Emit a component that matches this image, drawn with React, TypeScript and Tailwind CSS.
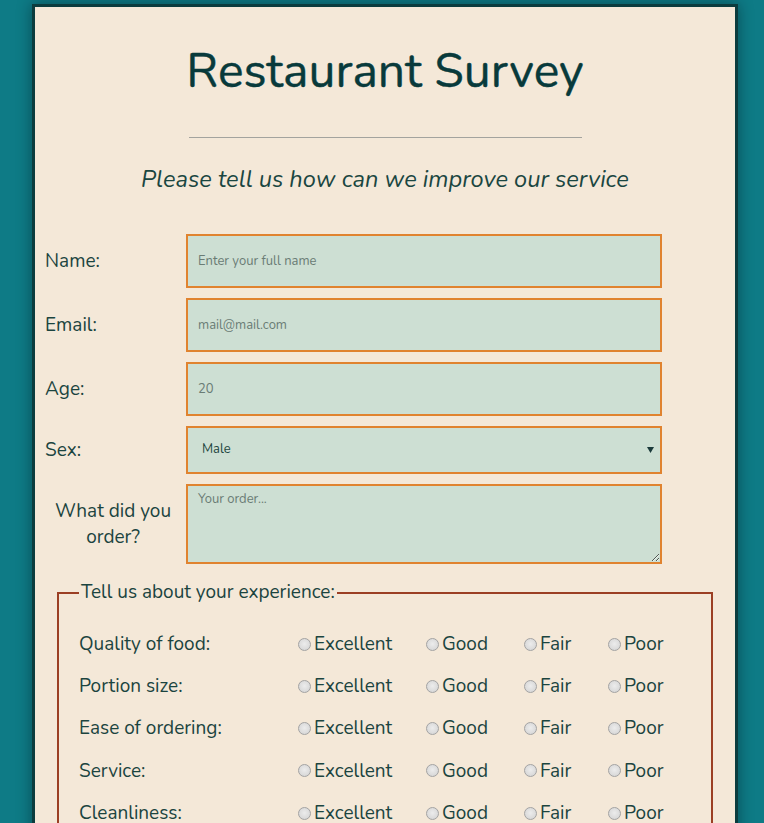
import React from "react";

const font = { fontFamily: "Nunito, Lato, 'Open Sans', sans-serif" };

const rows = ["Quality of food:", "Portion size:", "Ease of ordering:", "Service:", "Cleanliness:"];
const opts: { label: string; w: string }[] = [
  { label: "Excellent", w: "w-[128px]" },
  { label: "Good", w: "w-[98px]" },
  { label: "Fair", w: "w-[84px]" },
  { label: "Poor", w: "w-[80px]" },
];

function Radio({ name }: { name: string }) {
  return (
    <input
      type="radio"
      name={name}
      className="appearance-none w-[13px] h-[13px] rounded-full border border-[#a3a3a3] bg-[radial-gradient(circle_at_50%_45%,#ececec_0%,#dcdcdc_60%,#cfcfcf_100%)] m-0 shrink-0"
    />
  );
}

export default function App() {
  const inputCls =
    "w-[476px] h-[54px] border-2 border-[#e0832f] bg-[#cddfd3] pl-[10px] text-[13px] text-[#24473f] placeholder:text-[#6a7c75] outline-none";
  return (
    <div className="min-h-[823px] bg-[#0e7b86] pt-[4px] pb-[40px]" style={font}>
      <div className="ml-[32px] w-[706px] border-[3px] border-[#0b3c3e] bg-[#f4e8d8] shadow-[0_0_14px_rgba(0,20,25,0.45)] pb-[40px]">
        <h1 className="mt-[36px] text-center text-[48px] leading-[56px] text-[#083a3b] font-normal [-webkit-text-stroke:0.4px_#083a3b]">
          Restaurant Survey
        </h1>
        <hr className="mx-auto mt-[38px] w-[393px] border-0 border-t border-[#a3a39e]" />
        <p className="mt-[27px] text-center italic text-[23.6px] leading-[28px] text-[#1a4641]">
          Please tell us how can we improve our service
        </p>

        <form className="mt-[41px] flex flex-col">
          <div className="flex flex-col gap-[10px] pl-[10px]">
            <div className="flex items-center">
              <label className="w-[141px] text-[19px] text-[#1b443f]">Name:</label>
              <input className={inputCls} placeholder="Enter your full name" />
            </div>
            <div className="flex items-center">
              <label className="w-[141px] text-[19px] text-[#1b443f]">Email:</label>
              <input className={inputCls} placeholder="mail@mail.com" />
            </div>
            <div className="flex items-center">
              <label className="w-[141px] text-[19px] text-[#1b443f]">Age:</label>
              <input className={inputCls} placeholder="20" />
            </div>
            <div className="flex items-center">
              <label className="w-[141px] text-[19px] text-[#1b443f]">Sex:</label>
              <div className="relative">
                <select
                  className="appearance-none w-[476px] h-[48px] border-2 border-[#e0832f] bg-[#cddfd3] pl-[14px] text-[13px] text-[#24473f] outline-none"
                  style={font}
                  defaultValue="Male"
                >
                  <option>Male</option>
                  <option>Female</option>
                  <option>Other</option>
                </select>
                <svg
                  className="pointer-events-none absolute right-[8px] top-[21px]"
                  width="7"
                  height="6"
                  viewBox="0 0 7 6"
                >
                  <path d="M0 0 H7 L3.5 6 Z" fill="#1b3a3a" />
                </svg>
              </div>
            </div>
            <div className="flex items-center">
              <label className="w-[141px] pr-[5px] text-center text-[19px] leading-[26px] text-[#1b443f]">
                What did you order?
              </label>
              <textarea
                className="w-[476px] h-[80px] border-2 border-[#e0832f] bg-[#cddfd3] pl-[10px] pt-[4px] text-[13px] text-[#24473f] placeholder:text-[#6a7c75] outline-none"
                style={font}
                placeholder="Your order..."
              />
            </div>
          </div>

          <fieldset className="mt-[16px] mx-[22px] border-2 border-[#9b3f24] px-[20px] pt-[18px] pb-[20px]">
            <legend className="px-[2px] text-[19px] leading-[25px] text-[#1b443f]">
              Tell us about your experience:
            </legend>
            {rows.map((r, i) => (
              <div key={r} className="flex items-center h-[42.25px]">
                <span className="w-[219px] text-[19px] text-[#1b443f]">{r}</span>
                {opts.map((o) => (
                  <label key={o.label} className={`${o.w} flex items-center gap-[3px] text-[19px] text-[#1b443f]`}>
                    <Radio name={`q${i}`} />
                    <span>{o.label}</span>
                  </label>
                ))}
              </div>
            ))}
          </fieldset>

          <div className="mx-[22px] mt-[20px] flex flex-col gap-[10px]">
            <label className="text-[19px] text-[#1b443f]">Any comments or suggestions?</label>
            <textarea
              className="h-[100px] border-2 border-[#e0832f] bg-[#cddfd3] pl-[10px] pt-[4px] text-[13px] outline-none"
              style={font}
            />
            <button
              type="button"
              className="mx-auto mt-[10px] w-[200px] h-[44px] bg-[#e0832f] text-[19px] text-white"
            >
              Submit
            </button>
          </div>
        </form>
      </div>
    </div>
  );
}
